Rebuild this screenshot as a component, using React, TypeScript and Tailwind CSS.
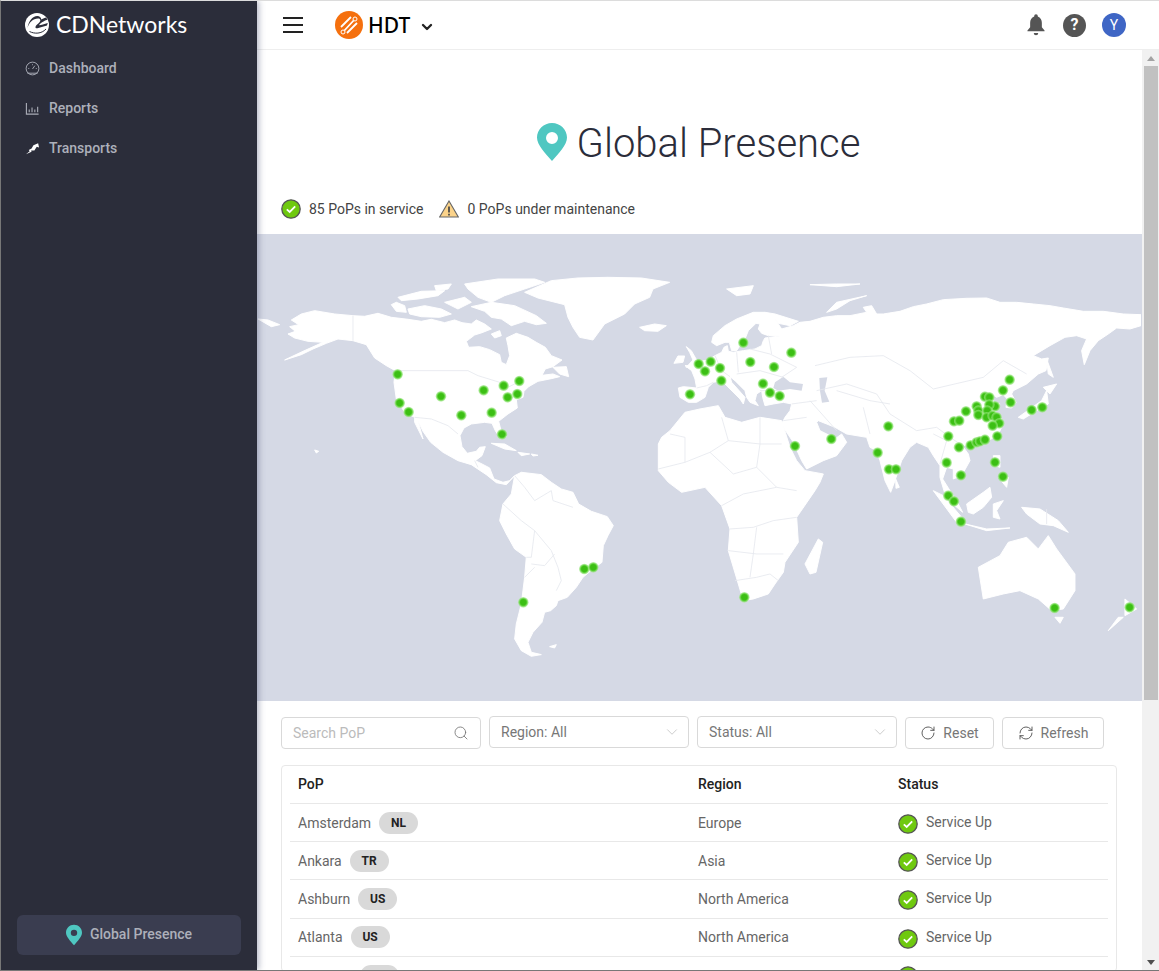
import React from "react";
import { Search, ChevronDown, RotateCw, RefreshCw } from "lucide-react";

const westLand = [
  "M95,278 122,272 100,258 130,240 170,230 230,240 285,245 320,247 360,238 400,250 450,256 490,262 520,256 560,266 590,258 612,266 640,270 655,258 680,270 700,285 672,296 650,303 625,322 632,340 665,338 695,347 725,362 730,385 745,392 755,365 750,335 745,312 775,298 810,310 835,325 862,340 880,365 912,378 885,398 862,405 852,424 885,420 905,428 880,434 840,442 812,458 798,472 795,490 775,497 778,522 750,540 722,562 728,585 745,608 728,615 712,590 702,568 680,565 640,570 618,582 606,605 612,638 628,658 655,652 665,640 682,638 672,665 652,680 672,690 695,702 708,735 735,745 755,740 770,725 745,752 715,746 685,722 640,692 600,680 555,655 518,625 495,592 480,560 495,615 470,565 470,550 440,535 415,495 408,445 412,410 385,395 350,372 325,332 285,320 240,315 205,328 165,345 130,362 80,378 135,352 195,325 150,322 110,312 90,300 112,292Z",
  "M770,725 790,715 850,722 880,745 910,765 945,775 962,810 1000,832 1048,848 1066,875 1050,905 1036,935 1032,985 1005,1005 975,1030 955,1060 928,1090 900,1100 895,1115 878,1130 860,1135 852,1165 825,1195 810,1225 820,1255 850,1262 820,1267 790,1250 770,1215 775,1170 790,1110 800,1030 805,970 770,945 745,900 725,860 735,810 760,780Z",
  "M400,212 415,205 440,215 445,235 415,232Z",
  "M450,225 500,215 550,225 580,240 545,250 490,248 455,240Z",
  "M420,190 490,172 560,170 540,185 480,195 430,200Z",
  "M620,150 720,135 830,135 860,145 800,165 740,185 700,205 660,190 630,165Z",
  "M640,218 700,205 770,215 835,245 865,268 835,272 800,262 760,275 730,255 700,250 680,232Z",
  "M560,205 620,190 640,205 600,225Z",
  "M530,155 580,150 570,165 535,170Z",
  "M700,300 725,290 730,305 710,312Z",
  "M885,400 925,398 932,428 905,420Z",
  "M800,175 880,140 960,132 1050,130 1150,132 1235,145 1185,165 1175,190 1130,210 1100,240 1040,270 1005,318 965,310 945,280 930,250 920,212 840,192Z",
  "M1145,280 1190,270 1225,275 1200,292 1160,290Z",
  "M700,628 740,630 775,650 740,645Z",
  "M780,655 815,660 790,665Z",
  "M820,660 840,664 825,666Z",
  "M0,255 30,258 65,272 40,278Z",
  "M1248,388 1260,366 1280,366 1275,385Z",
  "M1285,338 1300,350 1320,385 1320,398 1285,400 1305,378 1295,355Z",
  "M170,648 182,652 175,657Z",
  "M875,1238 895,1232 890,1242Z",
];

const eastLand = [
  "M85,462 100,458 140,462 135,435 125,410 105,395 135,395 150,382 175,378 195,365 215,355 222,340 232,335 235,352 250,355 280,350 315,345 335,335 340,320 345,312 395,305 355,305 335,298 325,285 330,270 318,268 295,290 285,315 270,335 260,350 245,350 238,325 225,325 200,335 185,325 190,305 225,275 260,255 310,235 345,235 375,240 445,262 420,275 385,268 375,255 395,285 430,275 450,265 480,262 520,250 560,245 600,245 650,235 640,220 665,215 680,240 700,240 750,232 790,218 830,210 880,197 950,193 1010,192 1050,205 1100,205 1150,210 1200,215 1240,222 1300,232 1360,232 1420,240 1473,242 1473,275 1440,285 1400,282 1375,300 1345,320 1320,350 1303,392 1295,350 1310,315 1280,305 1245,310 1200,335 1150,365 1175,375 1195,372 1188,410 1165,420 1130,450 1090,470 1085,480 1098,505 1085,522 1068,520 1072,495 1060,482 1040,490 1025,480 1030,505 1050,510 1035,530 1055,555 1060,570 1045,600 1010,625 970,640 935,632 955,660 960,680 935,725 910,735 910,705 890,700 878,735 900,770 925,810 938,835 915,815 885,780 870,730 870,695 850,665 835,640 800,625 780,640 755,680 745,710 735,740 722,775 705,740 690,680 680,650 660,640 650,610 590,600 555,580 530,570 505,560 500,565 510,590 540,605 555,615 575,600 590,625 560,665 520,680 470,705 455,680 430,625 400,580 395,570 405,550 420,530 425,510 400,505 370,510 345,515 338,490 335,470 320,480 315,500 325,515 300,505 290,490 285,470 255,440 240,428 245,445 285,490 280,510 270,495 240,465 215,440 190,445 175,460 165,490 140,505 115,505 90,490Z",
  "M25,630 35,610 60,590 105,535 150,525 205,515 225,550 275,565 330,550 395,560 420,640 440,680 465,710 520,720 510,745 495,770 440,850 445,925 405,985 400,1015 375,1050 355,1080 310,1095 280,1100 262,1040 235,950 240,885 215,815 165,760 95,775 55,745 25,710Z",
  "M505,915 518,925 498,1015 480,1020 465,990Z",
  "M737,735 748,760 738,763Z",
  "M1105,550 1140,525 1175,500 1190,470 1195,510 1160,530 1120,555Z",
  "M1180,460 1220,450 1200,480Z",
  "M1190,375 1210,430 1195,420Z",
  "M1030,665 1050,665 1050,700 1035,695Z",
  "M1045,730 1075,730 1070,760Z",
  "M850,770 880,785 935,850 920,865Z",
  "M945,870 1010,885 1080,882 1010,890Z",
  "M950,810 1000,775 1020,760 1025,790 1000,820 970,840 955,835Z",
  "M1030,810 1060,800 1040,830 1050,855 1030,850Z",
  "M1115,820 1170,825 1225,860 1255,895 1210,875 1170,870 1130,840Z",
  "M985,1000 1050,965 1075,925 1130,910 1165,945 1195,905 1220,945 1275,1020 1275,1070 1240,1125 1205,1130 1165,1095 1110,1070 1060,1080 1000,1095Z",
  "M1215,1150 1240,1150 1230,1168Z",
  "M1425,1095 1460,1125 1425,1145Z",
  "M1420,1150 1375,1190 1405,1150Z",
  "M230,165 310,155 300,180 260,185Z",
  "M530,235 560,205 650,185 600,200 560,225Z",
  "M480,152 560,150 630,150 560,158Z",
];

const westBorders = [
  "M285,245 285,320",
  "M415,410 630,410 660,425 725,445 740,465 790,440",
  "M470,550 520,555 570,575 600,600",
  "M770,725 800,760 830,800 880,770 885,800 945,820",
  "M735,810 790,860 830,890 820,970 805,970",
  "M830,890 880,950 900,1000 910,1040 895,1070",
  "M820,990 860,995 890,960",
  "M800,1030 830,1000",
  "M650,680 660,700",
];

const eastBorders = [
  "M25,705 105,685 105,610 60,600",
  "M105,685 180,655 235,620 330,630 395,630",
  "M235,620 215,550",
  "M330,550 330,630 320,700 380,760 440,770",
  "M180,655 250,720 320,700",
  "M215,815 280,780 380,760",
  "M240,885 310,880 370,860 440,850",
  "M235,950 320,960 400,960",
  "M320,880 310,960 300,1030",
  "M255,1040 320,1030 360,1020 385,1040",
  "M495,395 600,370 700,365 780,410 850,465 1000,430 1060,380 1130,420",
  "M500,470 590,450 680,480 720,540 800,590 860,580 900,610 930,630",
  "M560,470 660,500 720,510",
  "M480,500 560,590",
  "M640,520 660,600",
  "M395,430 440,400 360,360 300,345",
  "M260,420 330,410 400,430",
  "M425,510 500,500",
  "M1190,825 1190,870",
  "M870,690 890,620 850,600",
  "M140,462 170,455 190,445",
  "M195,365 215,410 240,428",
  "M260,355 265,415",
  "M355,305 365,360",
  "M330,470 395,470",
  "M400,560 470,550",
];

const westDots = [
  [419, 421], [425, 507], [452, 534], [549, 487], [610, 544], [677, 469], [701, 536], [737, 455],
  [749, 490], [778, 480], [784, 441], [732, 601], [796, 1105], [979, 1005], [1006, 1000],
];

const eastDots = [
  [120, 481], [146, 390], [165, 412], [182, 383], [210, 402], [214, 440], [280, 326], [301, 384],
  [372, 399], [424, 356], [339, 449], [360, 476], [389, 486], [435, 636], [544, 615], [683, 656],
  [715, 577], [717, 706], [738, 706], [895, 607], [890, 686], [933, 724], [927, 640], [895, 785],
  [912, 802], [933, 863], [283, 1090], [1214, 1122], [1439, 1120], [1035, 685], [1059, 728],
  [1042, 607], [1145, 528], [1177, 520], [1082, 505], [1059, 469], [1079, 437], [1005, 488],
  [1018, 490], [1035, 517], [1018, 512], [980, 517], [985, 530], [948, 532], [912, 562], [928, 560],
  [985, 543], [1012, 530], [1010, 550], [1028, 545], [1040, 550], [1048, 568], [1028, 575],
  [962, 634], [980, 625], [990, 622], [1005, 617],
];

const rows = [
  { pop: "Amsterdam", code: "NL", region: "Europe" },
  { pop: "Ankara", code: "TR", region: "Asia" },
  { pop: "Ashburn", code: "US", region: "North America" },
  { pop: "Atlanta", code: "US", region: "North America" },
];

const Pin = ({ className }: { className: string }) => (
  <svg viewBox="0 0 30 38" className={className}>
    <path
      fillRule="evenodd"
      fill="#4fc7c1"
      d="M15 0C6.700 0 0 6.500 0 14.600 0 22 8 30 15 38c7-8 15-16 15-23.400C30 6.500 23.300 0 15 0Zm0 9a6 6 0 1 1 0 12 6 6 0 0 1 0-12Z"
    />
  </svg>
);

const Check = ({ className }: { className: string }) => (
  <svg viewBox="0 0 20 20" className={className}>
    <circle cx="10" cy="10" r="9.200" fill="#6fc90f" stroke="#555" strokeWidth="1.300" />
    <path d="M5.800 10.300 8.700 13 14.200 7.400" fill="none" stroke="#fff" strokeWidth="1.800" />
  </svg>
);

const Dot = ({ x, y }: { x: number; y: number }) => <circle cx={x} cy={y} r="16" fill="url(#popDot)" />;

const WorldMap = () => (
  <svg viewBox="0 0 883 467" className="block ml-px w-[883px] h-[467px]">
    <defs>
      <radialGradient id="popDot">
        <stop offset="0%" stopColor="#3cbf14" />
        <stop offset="50%" stopColor="#3cbf14" />
        <stop offset="66%" stopColor="#58cf33" />
        <stop offset="100%" stopColor="#a5e98e" stopOpacity="0.6" />
      </radialGradient>
    </defs>
    <g transform="translate(0 0) scale(0.3333)" strokeLinejoin="round">
      {westLand.map((d) => (
        <path key={d} d={d} fill="#fff" stroke="#fff" strokeWidth="3" />
      ))}
      {westBorders.map((d) => (
        <path key={d} d={d} fill="none" stroke="#e6e8ee" strokeWidth="2.500" />
      ))}
    </g>
    <g transform="translate(392 0) scale(0.3333)" strokeLinejoin="round">
      {eastLand.map((d) => (
        <path key={d} d={d} fill="#fff" stroke="#fff" strokeWidth="3" />
      ))}
      <path d="M375,445 400,428 420,445 459,450 455,470 420,465 385,470 370,462Z" fill="#d5d9e5" />
      <path d="M508,432 532,430 524,470 538,503 516,506 510,470Z" fill="#d5d9e5" />
      {eastBorders.map((d) => (
        <path key={d} d={d} fill="none" stroke="#e6e8ee" strokeWidth="2.500" />
      ))}
    </g>
    <g transform="translate(0 0) scale(0.3333)">
      {westDots.map(([x, y]) => (
        <Dot key={`${x}-${y}`} x={x} y={y} />
      ))}
    </g>
    <g transform="translate(392 0) scale(0.3333)">
      {eastDots.map(([x, y]) => (
        <Dot key={`${x}-${y}`} x={x} y={y} />
      ))}
    </g>
  </svg>
);

export default function App() {
  return (
    <div className="w-[1159px] h-[971px] flex overflow-hidden bg-white border-t border-l border-b border-t-[#dcdcdc] border-l-[#777] border-b-[#777] font-['Roboto',sans-serif]">
      {/* Sidebar */}
      <aside className="w-[256px] shrink-0 h-full flex flex-col bg-[#2b2d3a] shadow-[2px_0_6px_rgba(90,100,130,0.45)] z-10">
        <div className="flex items-center gap-[7px] pl-6 h-[47px]">
          <svg viewBox="0 0 24 24" className="w-6 h-6">
            <circle cx="12" cy="12" r="12" fill="#fff" />
            <path d="M2.500 15C4 9.500 8 5.500 13 5.500c2.500 0 3 2 1.500 3.800-1.500 1.700-3.500 2.700-4 4.500-.3 1.200.7 1.700 2 1.500l9.500-2.800.8-2.500c-3.500 1-6.500 2-8.800 2.300.6-1.500 2.500-2.700 4.500-3.800 1.700-1 3-1.500 4-2L21 4.500c-2 .5-3.500 1.300-4.700 2-.2-2.300-1.800-3.500-4-3.500C7.500 3 3.500 8 2.500 15Z" fill="#2b2d3a" />
            <path d="M4.500 18.500c5 2.500 12 2.500 16.500-2.500" fill="none" stroke="#2b2d3a" strokeWidth="1" />
          </svg>
          <span className="font-['Lato',sans-serif] text-[23px] leading-none text-white">CDNetworks</span>
        </div>
        <nav className="flex flex-col text-sm font-medium text-[#adb0ba] pl-6">
          <div className="flex items-center h-10 gap-[9px]">
            <svg viewBox="0 0 16 16" className="w-[15px] h-[15px]" fill="none" stroke="#a9acb6" strokeWidth="1">
              <circle cx="8" cy="8" r="6.800" />
              <path d="M8 8.500 10.500 5M3.500 8h1M11.500 8h1M8 3.500v1M2.500 13h11" />
            </svg>
            <span>Dashboard</span>
          </div>
          <div className="flex items-center h-10 gap-[9px]">
            <svg viewBox="0 0 16 16" className="w-[15px] h-[15px]" fill="none" stroke="#a9acb6" strokeWidth="1.200">
              <path d="M1.500 2v12h13" />
              <path d="M4.500 12V9M7.500 12V7M10.500 12V9M13.500 12V6" />
            </svg>
            <span>Reports</span>
          </div>
          <div className="flex items-center h-10 gap-[9px]">
            <svg viewBox="0 0 16 16" className="w-[15px] h-[15px]" fill="#fff">
              <path d="M1 14 5 11 4 9.500 7 8 9 4.500 14 2.500 15 7 12.500 6 10 10 6.500 10 7 11.500Z" />
            </svg>
            <span>Transports</span>
          </div>
        </nav>
        <div className="mt-auto mx-4 mb-[15px] h-10 rounded-md bg-[#3a3d50] flex items-center justify-center gap-2 text-sm font-medium text-[#adb0ba]">
          <Pin className="w-[16px] h-[22px]" />
          <span className="-mt-0.5">Global Presence</span>
        </div>
      </aside>

      {/* Main */}
      <div className="flex-1 flex flex-col min-w-0">
        <header className="h-[49px] shrink-0 flex items-center bg-white border-b border-[#eeeeee] pl-[26px] pr-[33px]">
          <svg viewBox="0 0 20 16" className="w-5 h-4">
            <path d="M0 1h20M0 8h20M0 15h20" stroke="#222" strokeWidth="2" />
          </svg>
          <svg viewBox="0 0 28 28" className="w-7 h-7 ml-8">
            <circle cx="14" cy="14" r="14" fill="#f5700e" />
            <path d="M8 21 20 8M6 16 16 6M12 22 22 12" stroke="#fff" strokeWidth="1.800" />
            <circle cx="8" cy="21" r="2" fill="#f5700e" stroke="#fff" />
            <circle cx="20" cy="8" r="2" fill="#f5700e" stroke="#fff" />
          </svg>
          <span className="ml-[5px] font-['Noto_Sans',sans-serif] font-medium text-[21px] leading-none text-black">HDT</span>
          <ChevronDown className="ml-[9px] w-4 h-4 mt-1 text-[#222]" strokeWidth={3.500} />
          <div className="ml-auto flex items-center">
            <svg viewBox="0 0 20 24" className="w-[18px] h-[22px]" fill="#555">
              <path d="M10 0a2 2 0 0 1 2 2v.500c3 1 4.500 4 4.500 7v5l3 3.500v1H.500v-1l3-3.500v-5c0-3 1.500-6 4.500-7V2a2 2 0 0 1 2-2ZM7.500 21h5a2.500 2.500 0 0 1-5 0Z" />
            </svg>
            <div className="ml-[18px] w-[23px] h-[23px] rounded-full bg-[#555] text-white text-[16px] font-bold flex items-center justify-center">?</div>
            <div className="ml-[16px] w-6 h-6 rounded-full bg-[#3f66c5] text-white text-sm flex items-center justify-center">Y</div>
          </div>
        </header>

        <div className="flex-1 flex min-h-0">
          <main className="flex-1 min-w-0 overflow-hidden flex flex-col">
            <div className="shrink-0 flex items-center justify-center gap-[10px] pt-[75px] pr-[3px] h-[112px]">
              <Pin className="w-[30px] h-[38px] -mt-1 ml-px" />
              <h1 className="text-[40px] font-light leading-none text-[#2b2d3a]">Global Presence</h1>
            </div>
            <div className="shrink-0 flex items-center h-[72px] pl-[24px] pt-[22px] text-sm text-[#444]">
              <Check className="w-5 h-5" />
              <span className="ml-2">85 PoPs in service</span>
              <svg viewBox="0 0 20 18" className="ml-[15px] w-5 h-[18px]">
                <path d="M10 1 19.300 17H.7Z" fill="#fbd38a" stroke="#666" strokeWidth="1.100" />
                <path d="M10 6.500v6M10 13.800v1.700" stroke="#444" strokeWidth="1.700" />
              </svg>
              <span className="ml-[9px]">0 PoPs under maintenance</span>
            </div>
            <div className="h-[467px] bg-[#d5d9e5] shrink-0">
              <WorldMap />
            </div>
            <div className="shrink-0 flex items-start gap-2 pl-[24px] pt-[15px] text-sm text-[#777]">
              <div className="w-[200px] h-[32px] mt-px pb-px flex items-center justify-between border border-[#d9d9d9] rounded pl-[11px] pr-[11px] text-[#bbb]">
                <span>Search PoP</span>
                <Search className="w-4 h-4 text-[#777]" strokeWidth={1.300} />
              </div>
              <div className="w-[200px] h-[32px] pb-px flex items-center justify-between border border-[#d9d9d9] rounded pl-[11px] pr-[7px]">
                <span>Region: All</span>
                <ChevronDown className="w-[18px] h-[18px] text-[#bbb]" strokeWidth={1} />
              </div>
              <div className="w-[200px] h-[32px] pb-px flex items-center justify-between border border-[#d9d9d9] rounded pl-[11px] pr-[7px]">
                <span>Status: All</span>
                <ChevronDown className="w-[18px] h-[18px] text-[#bbb]" strokeWidth={1} />
              </div>
              <div className="w-[89px] h-[32px] mt-px pb-px flex items-center justify-center gap-[7px] border border-[#d9d9d9] rounded">
                <RotateCw className="w-4 h-4 text-[#555]" strokeWidth={1.400} />
                <span>Reset</span>
              </div>
              <div className="w-[102px] h-[32px] mt-px pb-px flex items-center justify-center gap-[7px] border border-[#d9d9d9] rounded">
                <RefreshCw className="w-4 h-4 text-[#555]" strokeWidth={1.400} />
                <span>Refresh</span>
              </div>
            </div>
            <div className="ml-[24px] mt-[16px] w-[836px] flex-1 border border-[#e8e8e8] rounded px-2 text-sm">
              <div className="flex items-center h-[38px] pb-px border-b border-[#e8e8e8] font-medium text-[#222] pl-2">
                <div className="w-[400px]">PoP</div>
                <div className="w-[200px]">Region</div>
                <div>Status</div>
              </div>
              {rows.map((r) => (
                <div key={r.pop} className="flex items-center h-[38.200px] border-b border-[#e8e8e8] text-[#666] pl-2">
                  <div className="w-[400px] flex items-center gap-2">
                    <span>{r.pop}</span>
                    <span className="w-[39px] h-[22px] rounded-full bg-[#d9d9d9] text-[#222] text-xs font-bold flex items-center justify-center">
                      {r.code}
                    </span>
                  </div>
                  <div className="w-[200px]">{r.region}</div>
                  <div className="flex items-center gap-[8px]">
                    <Check className="w-5 h-5 mt-[3px]" />
                    <span className="-mt-px">Service Up</span>
                  </div>
                </div>
              ))}
              <div className="flex h-[14px] overflow-hidden pl-2">
                <div className="w-[400px] pl-[62px]">
                  <span className="block w-[39px] h-[22px] mt-[8px] rounded-full bg-[#d9d9d9]" />
                </div>
                <div className="w-[200px]" />
                <svg viewBox="0 0 20 20" className="w-5 h-5 mt-[9px]">
                  <circle cx="10" cy="10" r="9.200" fill="#6fc90f" stroke="#555" strokeWidth="1.300" />
                </svg>
              </div>
            </div>
          </main>

          {/* Scrollbar */}
          <div className="w-[17px] shrink-0 bg-[#f1f1f1] flex flex-col items-center">
            <div className="h-[16px] flex items-center justify-center">
              <div className="w-0 h-0 border-x-4 border-x-transparent border-b-[5px] border-b-[#a3a3a3]" />
            </div>
            <div className="w-[14px] h-[634px] bg-[#c1c1c1]" />
            <div className="mt-auto h-[16px] flex items-center justify-center">
              <div className="w-0 h-0 border-x-4 border-x-transparent border-t-[5px] border-t-[#505050]" />
            </div>
          </div>
        </div>
      </div>
    </div>
  );
}
